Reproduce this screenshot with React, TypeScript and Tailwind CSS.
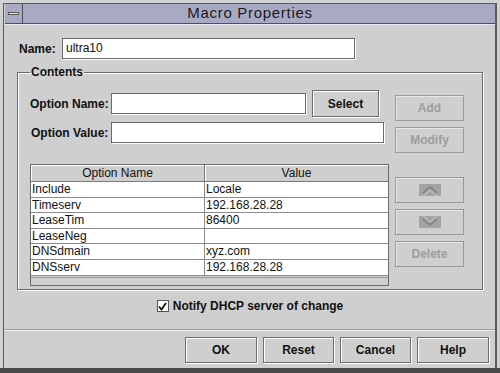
import React from "react";

const rows = [
  { name: "Include", value: "Locale" },
  { name: "Timeserv", value: "192.168.28.28" },
  { name: "LeaseTim", value: "86400" },
  { name: "LeaseNeg", value: "" },
  { name: "DNSdmain", value: "xyz.com" },
  { name: "DNSserv", value: "192.168.28.28" },
];

const btn =
  "flex items-center justify-center bg-[#cfcfcf] border border-[#6e6e6e] shadow-[inset_1px_1px_0_#fff,1px_1px_0_#fff] text-[12px] font-bold";
const btnOff =
  "flex items-center justify-center bg-[#cfcfcf] border border-[#9a9a9a] shadow-[inset_1px_1px_0_#e6e6e6] text-[12px] font-bold text-[#9d9d9d]";
const field =
  "h-[21px] bg-white border border-[#6a6a6a] shadow-[1px_1px_0_#fff] px-[3px] text-[12px] leading-[19px]";

const Arrow = ({ down }: { down?: boolean }) => (
  <svg width="22" height="12" viewBox="0 0 22 12">
    <rect x="0" y="0" width="22" height="12" fill="#a3a3a3" />
    <g transform={down ? "translate(0 12) scale(1 -1)" : undefined}>
      <polyline points="4,9 11,3 18,9" fill="none" stroke="#868686" strokeWidth="2" />
      <polyline points="4,12 11,6 18,12" fill="none" stroke="#bcbcbc" strokeWidth="1.5" />
    </g>
  </svg>
);

const App: React.FC = () => {
  return (
    <div className="w-[500px] h-[373px] bg-[#d2d2d2] flex flex-col font-['Liberation_Sans',Arial,sans-serif] text-[#111] overflow-hidden">
      <div className="h-[3px]" />
      {/* Window */}
      <div className="ml-[3px] w-[494px] flex-1 flex flex-col border-l border-r-2 border-t border-[#5c5c5c] bg-[#cfcfcf]">
        {/* Title bar */}
        <div className="h-[20px] flex items-center bg-[#a8aac4] border-b border-[#4e4e5c] ml-px">
          <div className="w-[18px] h-[19px] border-r border-[#4e4e5c] flex items-center justify-center">
            <div className="w-[11px] h-[3px] bg-[#e6e6f0] border border-[#555]" />
          </div>
          <div className="flex-1 text-center text-[15px] tracking-[0.7px] text-[#1a1a1a] pr-[18px]">
            Macro Properties
          </div>
        </div>
        <div className="h-px bg-[#e8e8f0]" />

        {/* Body */}
        <div className="flex-1 flex flex-col pl-[13px] pr-[6px]">
          {/* Name */}
          <div className="mt-[13px] flex items-center">
            <span className="ml-[2px] w-[43px] text-[12px] font-bold">Name:</span>
            <div className={`${field} w-[293px]`}>ultra10</div>
          </div>

          {/* Contents */}
          <fieldset className="mt-[6px] w-[466px] border border-[#6a6a6a] shadow-[inset_1px_1px_0_#fff,1px_1px_0_#fff] pl-[12px] pb-[3px]">
            <legend className="px-[1px] text-[12px] font-bold leading-[14px]">Contents</legend>
            <div className="mt-[11px] flex">
              {/* Left column */}
              <div className="w-[359px] flex flex-col">
                <div className="flex items-center h-[27px]">
                  <span className="w-[81px] text-[12px] font-bold">Option Name:</span>
                  <div className={`${field} w-[195px]`} />
                  <button className={`${btn} ml-[6px] w-[67px] h-[27px]`}>Select</button>
                </div>
                <div className="flex items-center mt-[5px]">
                  <span className="w-[81px] text-[12px] font-bold pl-[1px]">Option Value:</span>
                  <div className={`${field} w-[273px]`} />
                </div>

                {/* Table */}
                <div className="mt-[21px] h-[122px] border border-[#6a6a6a] bg-[#cfcfcf] flex flex-col">
                  <div className="flex h-[17px] border-b border-[#7a7a7a] text-[12px] leading-[16px]">
                    <div className="w-[174px] text-center border-r border-[#7a7a7a] shadow-[inset_1px_1px_0_#fff]">Option Name</div>
                    <div className="flex-1 text-center shadow-[inset_1px_1px_0_#fff]">Value</div>
                  </div>
                  {rows.map((r) => (
                    <div key={r.name} className="flex h-[15.6px] bg-white border-b border-[#8c8c8c] text-[12px] leading-[15px]">
                      <div className="w-[174px] pl-[1px] border-r border-[#8c8c8c]">{r.name}</div>
                      <div className="flex-1 pl-[1px]">{r.value}</div>
                    </div>
                  ))}
                  <div className="mt-auto h-[8px] border-t border-[#9a9a9a]" />
                </div>
              </div>

              {/* Right column */}
              <div className="ml-[6px] w-[69px] flex flex-col pt-[5px]">
                <button className={`${btnOff} h-[26px]`}>Add</button>
                <button className={`${btnOff} h-[26px] mt-[6px]`}>Modify</button>
                <button className={`${btnOff} h-[26px] mt-[24px]`}>
                  <Arrow />
                </button>
                <button className={`${btnOff} h-[26px] mt-[6px]`}>
                  <Arrow down />
                </button>
                <button className={`${btnOff} h-[26px] mt-[6px]`}>Delete</button>
              </div>
            </div>
          </fieldset>

          {/* Checkbox */}
          <div className="mt-[7px] flex items-center justify-center pr-[6px]">
            <div className="w-[12px] h-[12px] bg-white border border-[#555] flex items-center justify-center">
              <svg width="9" height="9" viewBox="0 0 9 9">
                <polyline points="1,4.5 3.5,7.5 8,1" fill="none" stroke="#111" strokeWidth="1.8" />
              </svg>
            </div>
            <span className="ml-[4px] text-[12px] font-bold">Notify DHCP server of change</span>
          </div>

          {/* Separator */}
          <div className="mt-[14px] -ml-[13px] -mr-[6px] border-t border-[#9c98c0] border-b border-b-[#ececf2]" />

          {/* Footer buttons */}
          <div className="mt-[6px] flex justify-end gap-[6px]">
            <button className={`${btn} w-[72px] h-[26px]`}>OK</button>
            <button className={`${btn} w-[71px] h-[26px]`}>Reset</button>
            <button className={`${btn} w-[71px] h-[26px]`}>Cancel</button>
            <button className={`${btn} w-[72px] h-[26px]`}>Help</button>
          </div>
        </div>
      </div>
      <div className="h-[5px] bg-[#4a4a4a]" />
    </div>
  );
};

export default App;
